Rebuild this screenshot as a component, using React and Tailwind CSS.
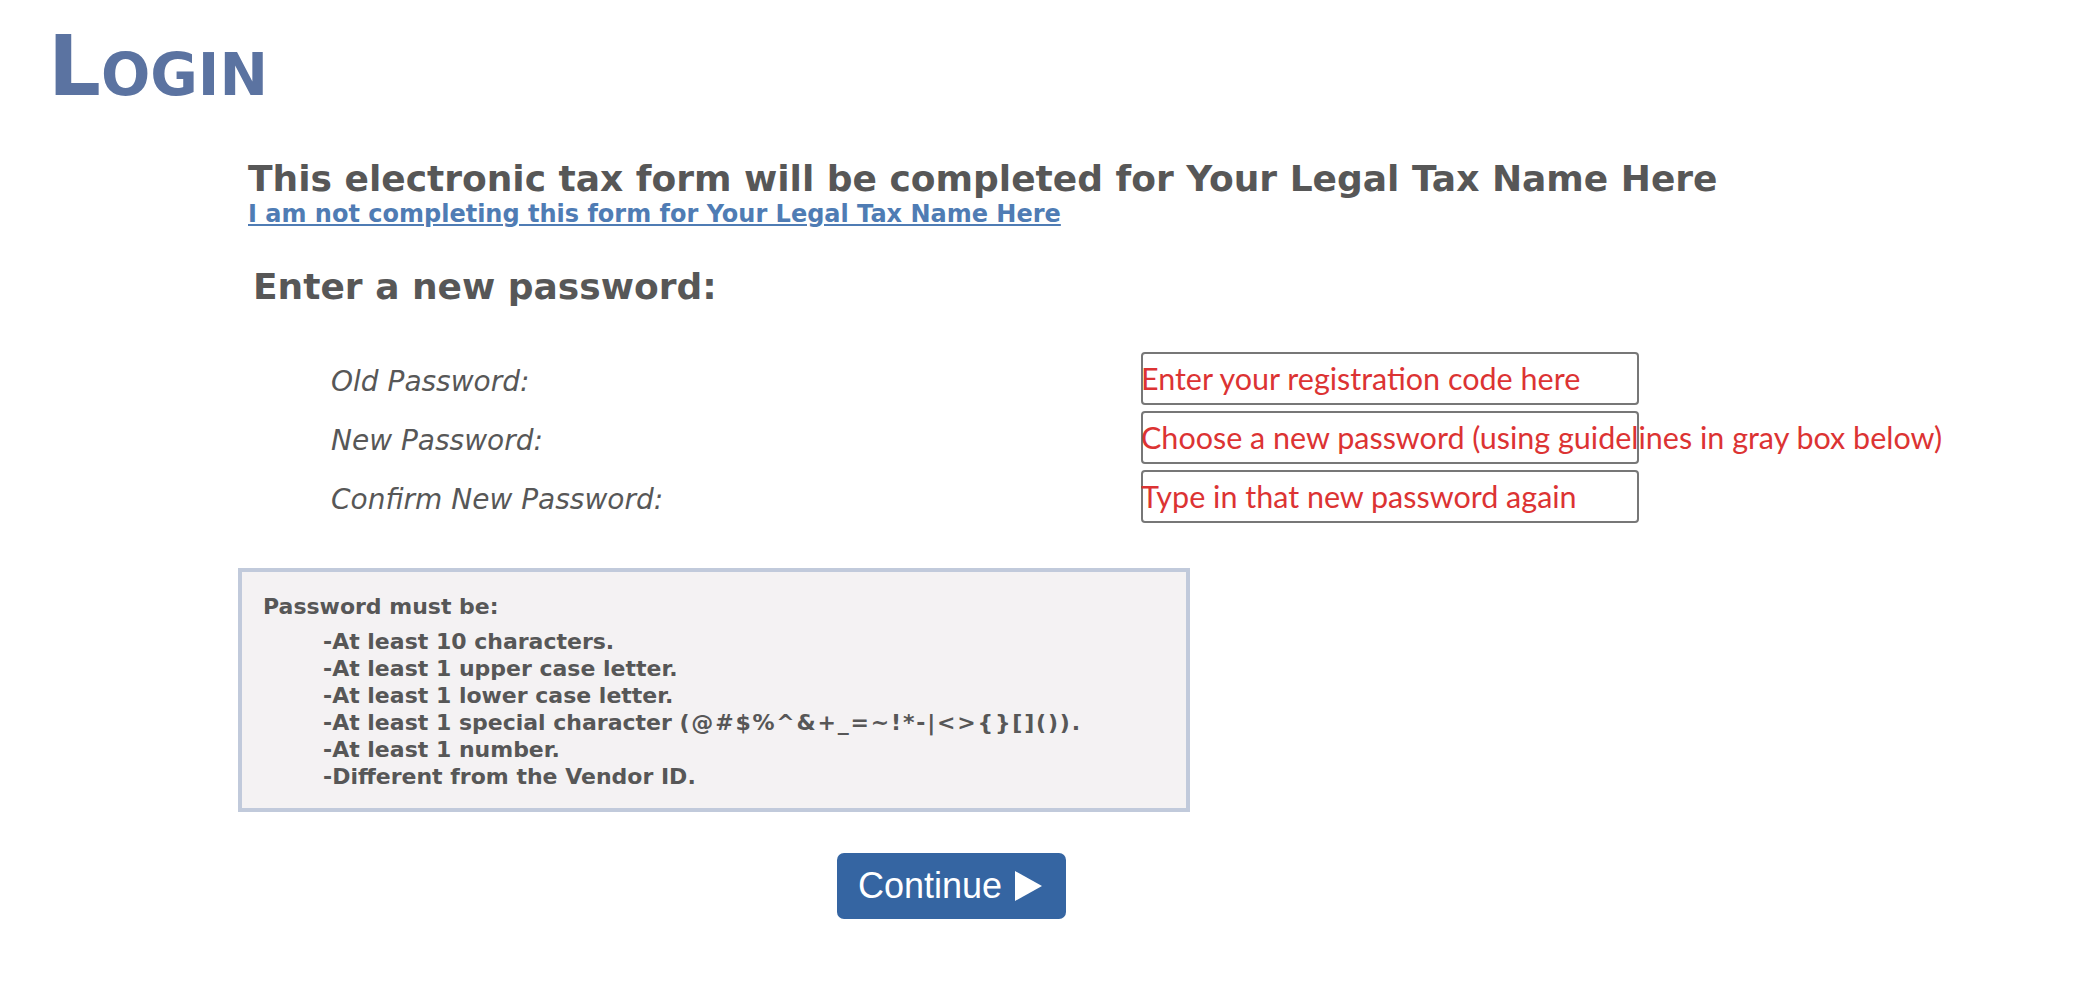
export default function App() {
  const rules = [
    ["-At least 10 characters.", ""],
    ["-At least 1 upper case letter.", ""],
    ["-At least 1 lower case letter.", ""],
    ["-At least 1 special character ", "(@#$%^&+_=~!*-|<>{}[]())."],
    ["-At least 1 number.", ""],
    ["-Different from the Vendor ID.", ""],
  ];
  const fields = [
    ["Old Password:", "Enter your registration code here"],
    ["New Password:", "Choose a new password (using guidelines in gray box below)"],
    ["Confirm New Password:", "Type in that new password again"],
  ];
  return (
    <div className="min-h-screen w-full bg-white font-['DejaVu_Sans',sans-serif] text-[#575757]">
      <h1 className="pl-[48px] pt-[25px] text-[83px] leading-none font-bold text-[#5b73a1] [font-variant:small-caps]">
        Login
      </h1>
      <div className="ml-[248px] mt-[49px] flex flex-col items-start">
        <h2 className="text-[36px] leading-[44px] font-bold text-[#575757]">
          This electronic tax form will be completed for Your Legal Tax Name Here
        </h2>
        <a href="#" className="text-[24px] leading-[26px] font-bold text-[#4f7cb4] underline">
          I am not completing this form for Your Legal Tax Name Here
        </a>
        <h3 className="ml-[5px] mt-[40px] text-[36px] leading-[40px] font-bold text-[#575757]">
          Enter a new password:
        </h3>
        <div className="mt-[45px] flex flex-col gap-[6px]">
          {fields.map(([label, ph]) => (
            <div key={label} className="flex h-[53px] items-center">
              <div className="ml-[83px] w-[810px] pt-[7px] text-[28px] italic leading-none text-[#575757]">
                {label}
              </div>
              <div className="relative h-[53px] w-[498px] rounded-[4px] border-2 border-[#777777]">
                <span className="absolute -left-[2px] top-[6px] whitespace-nowrap font-['Lato',sans-serif] text-[30.5px] leading-[36px] text-[#dc3333]">
                  {ph}
                </span>
              </div>
            </div>
          ))}
        </div>
        <div className="-ml-[10px] mt-[45px] w-[952px] border-4 border-[#c1cadb] bg-[#f4f2f3] pl-[21px] pt-[21px] pb-[18px] font-bold text-[22px] leading-[27px] text-[#575757]">
          <div>Password must be:</div>
          <div className="mt-[8px] pl-[60px]">
            {rules.map(([r, sym]) => (
              <div key={r}>
                {r}
                {sym && <span className="tracking-[1.8px]">{sym}</span>}
              </div>
            ))}
          </div>
        </div>
        <button className="ml-[589px] mt-[41px] flex h-[66px] w-[229px] items-center rounded-[7px] bg-[#3565a2] pl-[21px] font-['Liberation_Sans',Arial,sans-serif] text-[36px] text-white">
          <span>Continue</span>
          <svg className="ml-[13px]" width="27" height="30" viewBox="0 0 27 30">
            <path d="M0 0 L27 15 L0 30 Z" fill="white" />
          </svg>
        </button>
      </div>
    </div>
  );
}
